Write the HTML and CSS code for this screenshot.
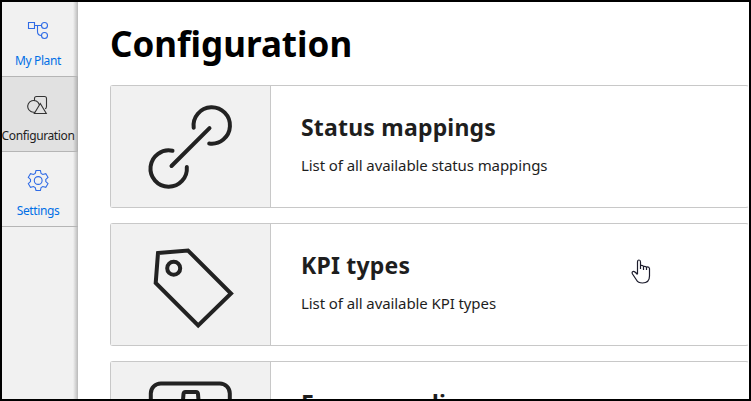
FILE: index.html
```html
<!DOCTYPE html>
<html lang="en">
<head>
<meta charset="utf-8">
<title>Configuration</title>
<link rel="stylesheet" href="styles.css">
</head>
<body>
<div class="app">
  <nav class="sidebar">
    <a class="nav-item">
      <svg class="nav-icon" viewBox="0 0 24 24"><path d="M2.500 4.500h6v6h-6zM8.500 7.500h7M11.500 7.500v6q0 4 4 4"/><circle cx="18.500" cy="7.500" r="3"/><circle cx="18.500" cy="17.500" r="3"/></svg>
      <span class="nav-label">My Plant</span>
    </a>
    <a class="nav-item active">
      <svg class="nav-icon" viewBox="0 0 24 24"><path d="M8.500 8V5.500Q8.500 3.500 10.500 3.500h8q2 0 2 2v8q0 2-1.500 2.300M14.300 10.500l6 10h-12zM9.300 19A5.900 5.900 0 1 1 13.200 11.500"/></svg>
      <span class="nav-label">Configuration</span>
    </a>
    <a class="nav-item">
      <svg class="nav-icon" viewBox="0 0 24 24"><path d="M9.200 5.500 10 2.500h4.400l.7 3 1.700 1 3-.9 2.200 3.700-2.200 2.100v2.200l2.200 2.100-2.200 3.700-3-.9-1.700 1-.7 3H10l-.8-3-1.700-1-3 .9-2.200-3.700 2.200-2.100v-2.200L2.300 9.300l2.200-3.700 3 .9z"/><circle cx="12.200" cy="12.500" r="3.900"/></svg>
      <span class="nav-label">Settings</span>
    </a>
  </nav>
  <main class="content">
    <h1>Configuration</h1>
    <section class="card">
      <div class="tile"><svg viewBox="0 0 160 121"><path class="round" d="M82.700 41.800A18.200 18.200 0 1 1 98.200 57.500M98.500 42.200 60.500 80M61.500 64.800A18.200 18.200 0 1 0 75.800 81"/></svg></div>
      <div class="info"><h2>Status mappings</h2><p>List of all available status mappings</p></div>
    </section>
    <section class="card">
      <div class="tile"><svg viewBox="0 0 160 121"><path d="M47 29 77 26.500 120 69.500 87.200 101.500 44.700 59z"/><circle cx="62.700" cy="44.200" r="6.500"/></svg></div>
      <div class="info"><h2>KPI types</h2><p>List of all available KPI types</p></div>
    </section>
    <section class="card">
      <div class="tile"><svg viewBox="0 0 160 121"><rect x="39.800" y="21.500" width="79" height="79" rx="10"/><path d="M71.500 44 72.500 32q.2-2 2-2h10.500q1.800 0 2 2l1 12z"/></svg></div>
      <div class="info"><h2>Energy media</h2></div>
    </section>
  </main>
  <svg class="cursor" viewBox="0 0 20 26"><path d="M6.500 15V3q0-2 1.500-2t1.500 2v7V6.500q2.700-.5 3 1V11 7.500q2.700-.5 3 1V11 8q2.700-.3 3 1.500V17q0 7-7 7-4.500 0-6-3L1.500 15q-1-2 .5-2.500t4.500 3"/></svg>
</div>
</body>
</html>
```
FILE: styles.css
```css
* { box-sizing: border-box; }
body { margin: 0; font-family: "Noto Sans", sans-serif; color: #1e1e1e; }
.app {
  position: relative;
  display: flex;
  width: 751px;
  height: 401px;
  overflow: hidden;
  border: 2px solid #000;
  background: #fff;
}
.sidebar {
  flex: none;
  width: 76px;
  background: linear-gradient(to right, transparent 71px, rgba(0, 0, 0, .23)), #f1f1f1;
}
.nav-item {
  display: flex;
  flex-direction: column;
  align-items: center;
  height: 75px;
  padding: 16px 4px 0 0;
  border-bottom: 1px solid #b5b5b5;
  color: #006fe6;
}
.nav-icon {
  width: 24px;
  height: 24px;
  fill: none;
  stroke: #2f6be6;
  stroke-width: 1.1;
}
.active { background: linear-gradient(to right, transparent 71px, rgba(0, 0, 0, .23)), #e1e1e1; color: #1e1e1e; }
.active .nav-icon { stroke: #333; }
.nav-label { margin-top: 10px; font-size: 12px; line-height: 18px; letter-spacing: -.38px; white-space: nowrap; }
.content { flex: 1; min-width: 0; padding: 16px 0 0 32px; }
h1 { margin: 0 0 15px; font-size: 35px; line-height: 52px; color: #000; }
.card {
  display: flex;
  height: 123px;
  margin-bottom: 15px;
  border: 1px solid #c8c8c8;
  border-right-color: #fff;
  border-radius: 3px;
}
.tile { flex: none; width: 160px; background: #f1f1f1; border-right: 1px solid #c8c8c8; }
.tile svg { display: block; width: 160px; height: 121px; fill: none; stroke: #222; stroke-width: 4; }
.round { stroke-linecap: round; }
.info { padding: 26px 0 0 30px; white-space: nowrap; }
h2 { margin: 0; font-size: 23px; line-height: 30px; letter-spacing: .2px; }
.info p { margin: 12px 0 0; font-size: 15px; line-height: 22px; letter-spacing: -.09px; }
.cursor {
  position: absolute;
  left: 629px;
  top: 257px;
  width: 20px;
  height: 26px;
  fill: #fff;
  stroke: #1c1c2c;
  stroke-width: 1.2;
}
```
